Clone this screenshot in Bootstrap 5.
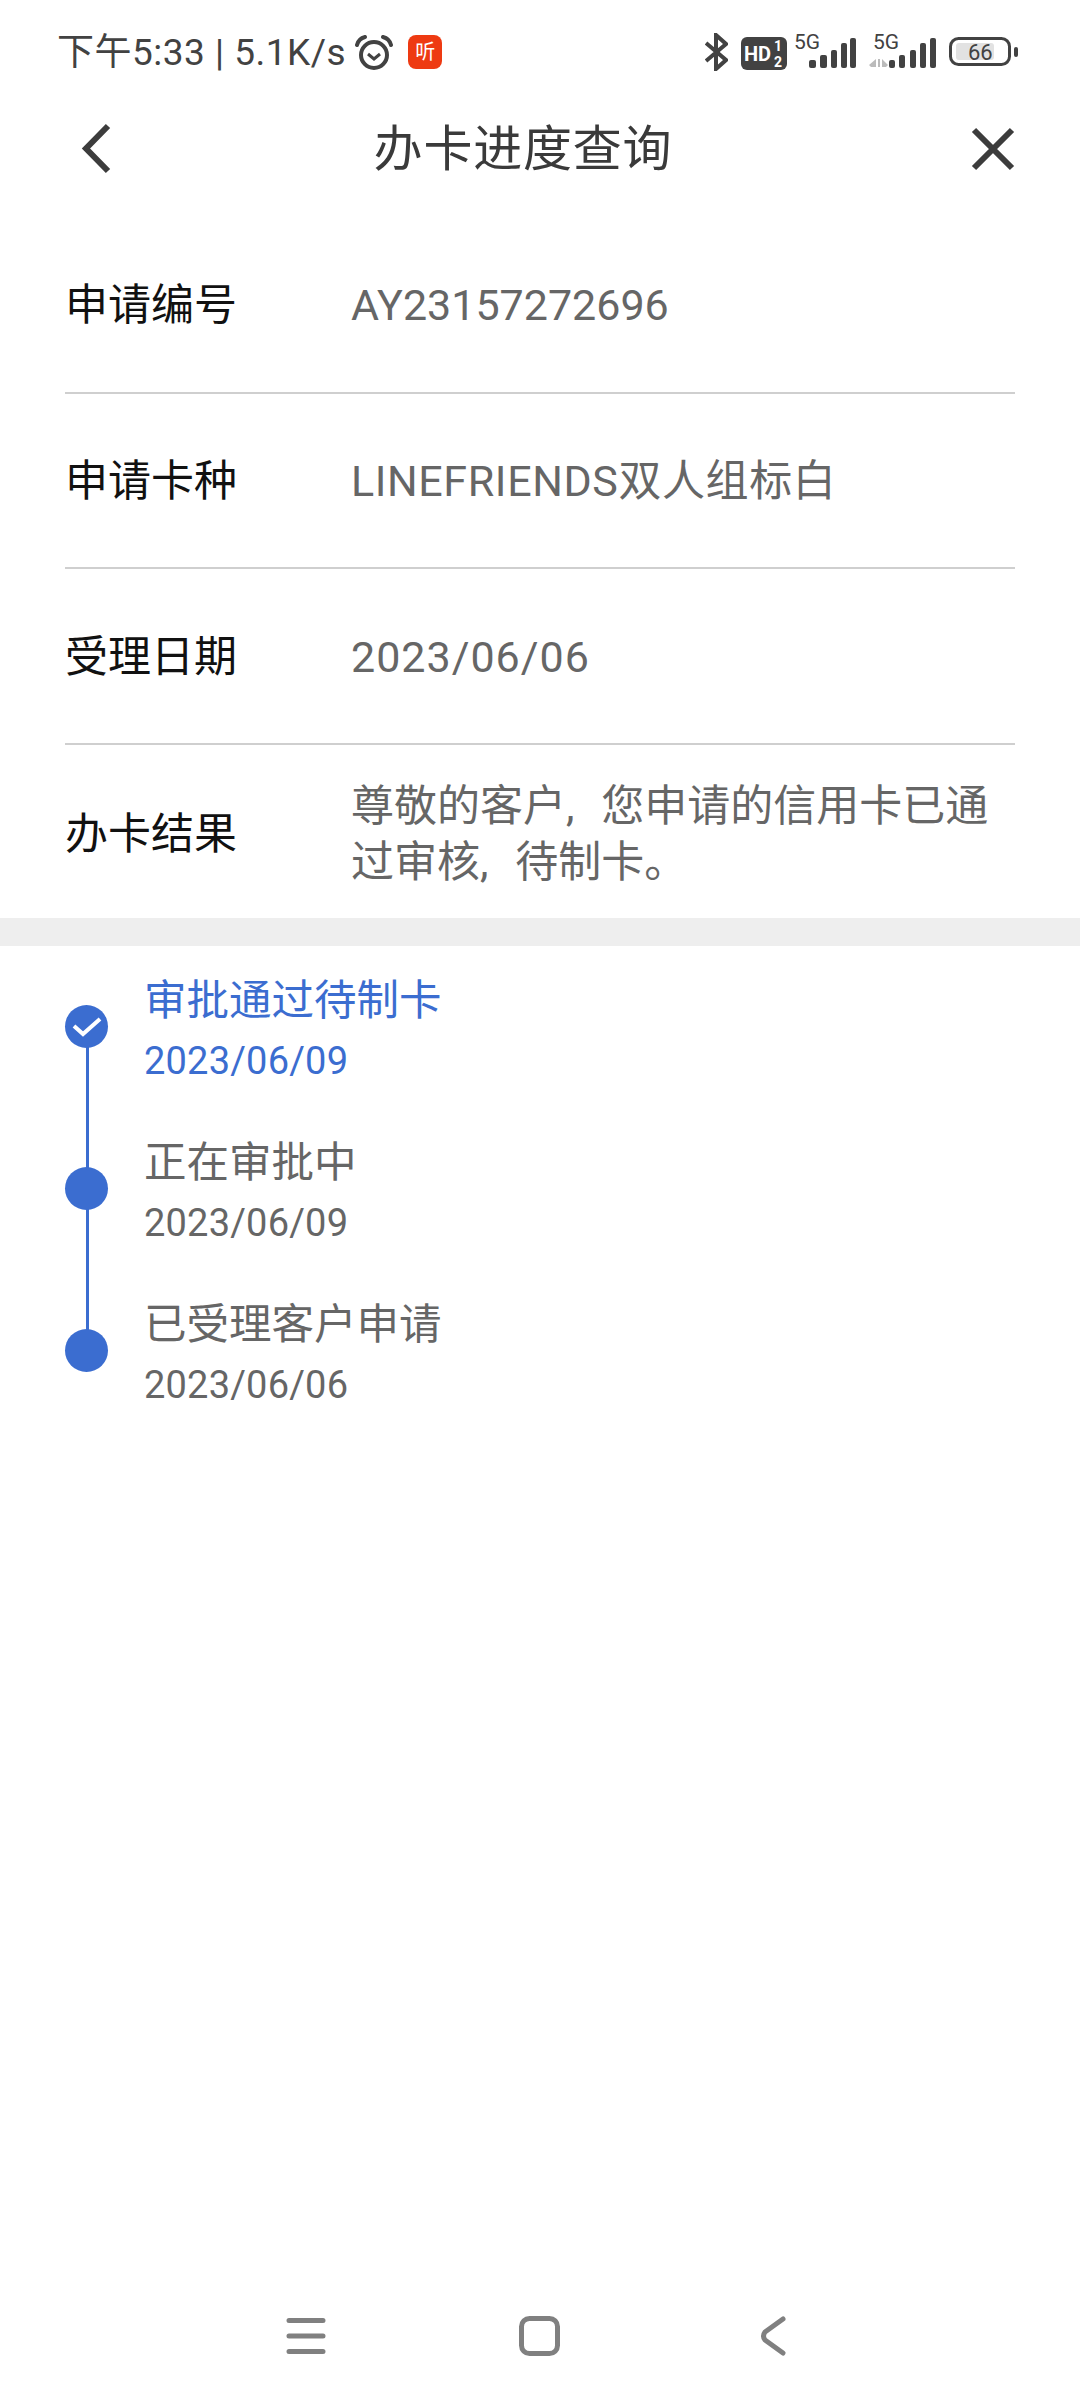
<!DOCTYPE html>
<html lang="zh-CN">
<head>
  <meta charset="UTF-8">
  <title>办卡进度查询</title>
  <link href="https://cdn.jsdelivr.net/npm/bootstrap@5.3.3/dist/css/bootstrap.min.css" rel="stylesheet">
  <style>
    body { background: #fff; font-family: Roboto, "Noto Sans CJK SC", sans-serif; color: #3c3c3c; }
    .page-wrap { width: 1080px; height: 2400px; }
    .status-bar { height: 104px; padding: 31px 62px 0 57px; font-size: 37px; line-height: 44px; color: #424242; letter-spacing: .5px; }
    .status-bar svg { display: block; flex: none; }
    .status-bar text { font-family: Roboto, sans-serif; letter-spacing: 0; }
    .listen-badge { width: 34px; height: 34px; margin-left: 14px; margin-top: 4px; border-radius: 8px; background: #ee3a12; color: #fff; font-size: 20px; line-height: 34px; text-align: center; letter-spacing: 0; }
    .status-icons { padding-top: 2px; }
    .icon-gap { margin-left: 13px; }
    .sig-icon { margin-top: -6px; }
    .top-nav { height: 92px; padding: 0 64px 0 78px; }
    .top-title { font-size: 49px; color: #3a3a3a; letter-spacing: .8px; margin-right: 38px; }
    .info-list { padding: 22px 65px 0 65px; }
    .info-row { height: 175.5px; padding-top: 2px; border-bottom: 2px solid #cfcfcf; }
    .info-row:first-child { padding-top: 0; }
    .info-row:last-child { height: 173.5px; padding-top: 6px; border-bottom: 0; }
    .info-label { width: 286px; flex: none; font-size: 43px; color: #111; }
    .info-value { font-size: 43px; line-height: 56px; color: #666; }
    .value-wide { letter-spacing: .6px; }
    .value-date { letter-spacing: 1px; }
    .value-note { word-spacing: 16px; }
    .band { height: 28px; background: #eeeeee; }
    .timeline { padding: 0 0 0 65px; }
    .step { height: 162px; position: relative; }
    .step-dot { width: 43px; height: 43px; flex: none; margin-top: 59px; margin-right: 36px; border-radius: 50%; background: #3b6dd0; position: relative; z-index: 1; }
    .step:not(:last-child)::after { content: ""; position: absolute; left: 21px; top: 80px; width: 3px; height: 162px; background: #3b6dd0; }
    .step-name { font-size: 42.5px; line-height: 56px; margin-top: 27px; color: #666; }
    .step-date { font-size: 38px; line-height: 48px; margin-top: 8px; color: #666; letter-spacing: .2px; }
    .step-on .step-name, .step-on .step-date { color: #3b6dd0; }
    .sys-nav { height: 100px; margin-top: auto; padding: 0 294px 28px 286px; }
    .home-icon { margin-left: 193px; }
  </style>
</head>
<body>
  <div class="page-wrap d-flex flex-column">

    <!-- status bar -->
    <div class="status-bar d-flex align-items-start">
      <span>下午5:33 | 5.1K/s</span>
      <svg class="ms-2 mt-1" width="40" height="36" viewBox="0 0 40 36" fill="none" stroke="#424242">
        <circle cx="20" cy="20" r="13" stroke-width="4"/>
        <path d="M14 19l6 5 6-5" stroke-width="3"/>
        <path d="M3 10c1-4 4-7 8-8M37 10c-1-4-4-7-8-8" stroke-width="4" stroke-linecap="round"/>
      </svg>
      <span class="listen-badge">听</span>

      <div class="status-icons d-flex align-items-start ms-auto">
        <svg width="23" height="38" viewBox="0 0 23 38" fill="none" stroke="#424242" stroke-width="4">
          <path d="M1 10l20 17-10 9V2l10 9L1 28"/>
        </svg>
        <svg class="icon-gap mt-1" width="46" height="34" viewBox="0 0 46 34">
          <rect width="46" height="33" rx="6" fill="#424242"/>
          <text x="3" y="24" font-size="20" font-weight="700" fill="#fff">HD</text>
          <text x="33" y="14" font-size="14" font-weight="700" fill="#fff">1</text>
          <text x="33" y="30" font-size="14" font-weight="700" fill="#fff">2</text>
        </svg>
        <svg class="sig-icon ms-2" width="61" height="41" viewBox="0 -6 61 41" fill="#424242">
          <text x="-1" y="16" font-size="21">5G</text>
          <rect x="14" y="27" width="7" height="8" rx="2"/>
          <rect x="25" y="22" width="7" height="13" rx="2"/>
          <rect x="36" y="17" width="6" height="18" rx="2"/>
          <rect x="46" y="10" width="6" height="25" rx="2"/>
          <rect x="55" y="5" width="6" height="30" rx="2"/>
        </svg>
        <svg class="sig-icon icon-gap" width="67" height="41" viewBox="0 -6 67 41" fill="#424242">
          <text x="4" y="16" font-size="21">5G</text>
          <path d="M0 32l7-6v8H2zM9 26h2v8H9zM13 26l6 6-2 2h-4z" fill="#bbb"/>
          <rect x="20" y="27" width="6" height="8" rx="2"/>
          <rect x="30" y="22" width="6" height="13" rx="2"/>
          <rect x="41" y="17" width="6" height="18" rx="2"/>
          <rect x="51" y="10" width="6" height="25" rx="2"/>
          <rect x="61" y="5" width="6" height="30" rx="2"/>
        </svg>
        <svg class="icon-gap" width="69" height="36" viewBox="0 0 69 36">
          <rect x="1.5" y="5.5" width="59" height="26" rx="8" fill="none" stroke="#424242" stroke-width="3"/>
          <rect x="7" y="10" width="38" height="17" rx="3" fill="#e2e2e2"/>
          <rect x="65" y="14" width="4" height="10" rx="2" fill="#424242"/>
          <text x="19" y="27" font-size="22" fill="#424242">66</text>
        </svg>
      </div>
    </div>

    <!-- title row -->
    <div class="top-nav d-flex align-items-center justify-content-between">
      <svg width="36" height="54" viewBox="0 0 36 54" fill="none" stroke="#3c3c3c" stroke-width="6">
        <path d="M30 3L8 25.5 30 48"/>
      </svg>
      <div class="top-title">办卡进度查询</div>
      <svg width="46" height="46" viewBox="0 0 46 46" fill="none" stroke="#3c3c3c" stroke-width="6">
        <path d="M4 3l38 38M42 3L4 41"/>
      </svg>
    </div>

    <!-- application details -->
    <div class="info-list">
      <div class="info-row d-flex align-items-center">
        <div class="info-label">申请编号</div>
        <div class="info-value">AY23157272696</div>
      </div>
      <div class="info-row d-flex align-items-center">
        <div class="info-label">申请卡种</div>
        <div class="info-value value-wide">LINEFRIENDS双人组标白</div>
      </div>
      <div class="info-row d-flex align-items-center">
        <div class="info-label">受理日期</div>
        <div class="info-value value-date">2023/06/06</div>
      </div>
      <div class="info-row d-flex align-items-center">
        <div class="info-label">办卡结果</div>
        <div class="info-value value-note">尊敬的客户, 您申请的信用卡已通过审核, 待制卡。</div>
      </div>
    </div>

    <div class="band"></div>

    <!-- progress steps -->
    <div class="timeline">
      <div class="step step-on d-flex">
        <div class="step-dot d-flex align-items-center justify-content-center">
          <svg width="30" height="22" viewBox="0 0 30 22" fill="none" stroke="#fff" stroke-width="4">
            <path d="M2 10l9 8L28 3"/>
          </svg>
        </div>
        <div>
          <div class="step-name">审批通过待制卡</div>
          <div class="step-date">2023/06/09</div>
        </div>
      </div>
      <div class="step d-flex">
        <div class="step-dot"></div>
        <div>
          <div class="step-name">正在审批中</div>
          <div class="step-date">2023/06/09</div>
        </div>
      </div>
      <div class="step d-flex">
        <div class="step-dot"></div>
        <div>
          <div class="step-name">已受理客户申请</div>
          <div class="step-date">2023/06/06</div>
        </div>
      </div>
    </div>

    <!-- system navigation -->
    <div class="sys-nav d-flex align-items-center">
      <svg width="40" height="40" viewBox="0 0 40 40" fill="none" stroke="#808080" stroke-width="5" stroke-linecap="round">
        <path d="M3 4.500h34M3 20h34M3 35.500h34"/>
      </svg>
      <svg class="home-icon" width="41" height="40" viewBox="0 0 41 40" fill="none" stroke="#808080" stroke-width="5">
        <rect x="2.500" y="2.500" width="36" height="35" rx="8"/>
      </svg>
      <svg class="ms-auto" width="26" height="40" viewBox="0 0 26 40" fill="none" stroke="#808080" stroke-width="5" stroke-linecap="round" stroke-linejoin="round">
        <path d="M23 3L5 16q-3 4 0 8l18 13"/>
      </svg>
    </div>
  </div>

  <script src="https://cdn.jsdelivr.net/npm/bootstrap@5.3.3/dist/js/bootstrap.bundle.min.js"></script>
</body>
</html>
